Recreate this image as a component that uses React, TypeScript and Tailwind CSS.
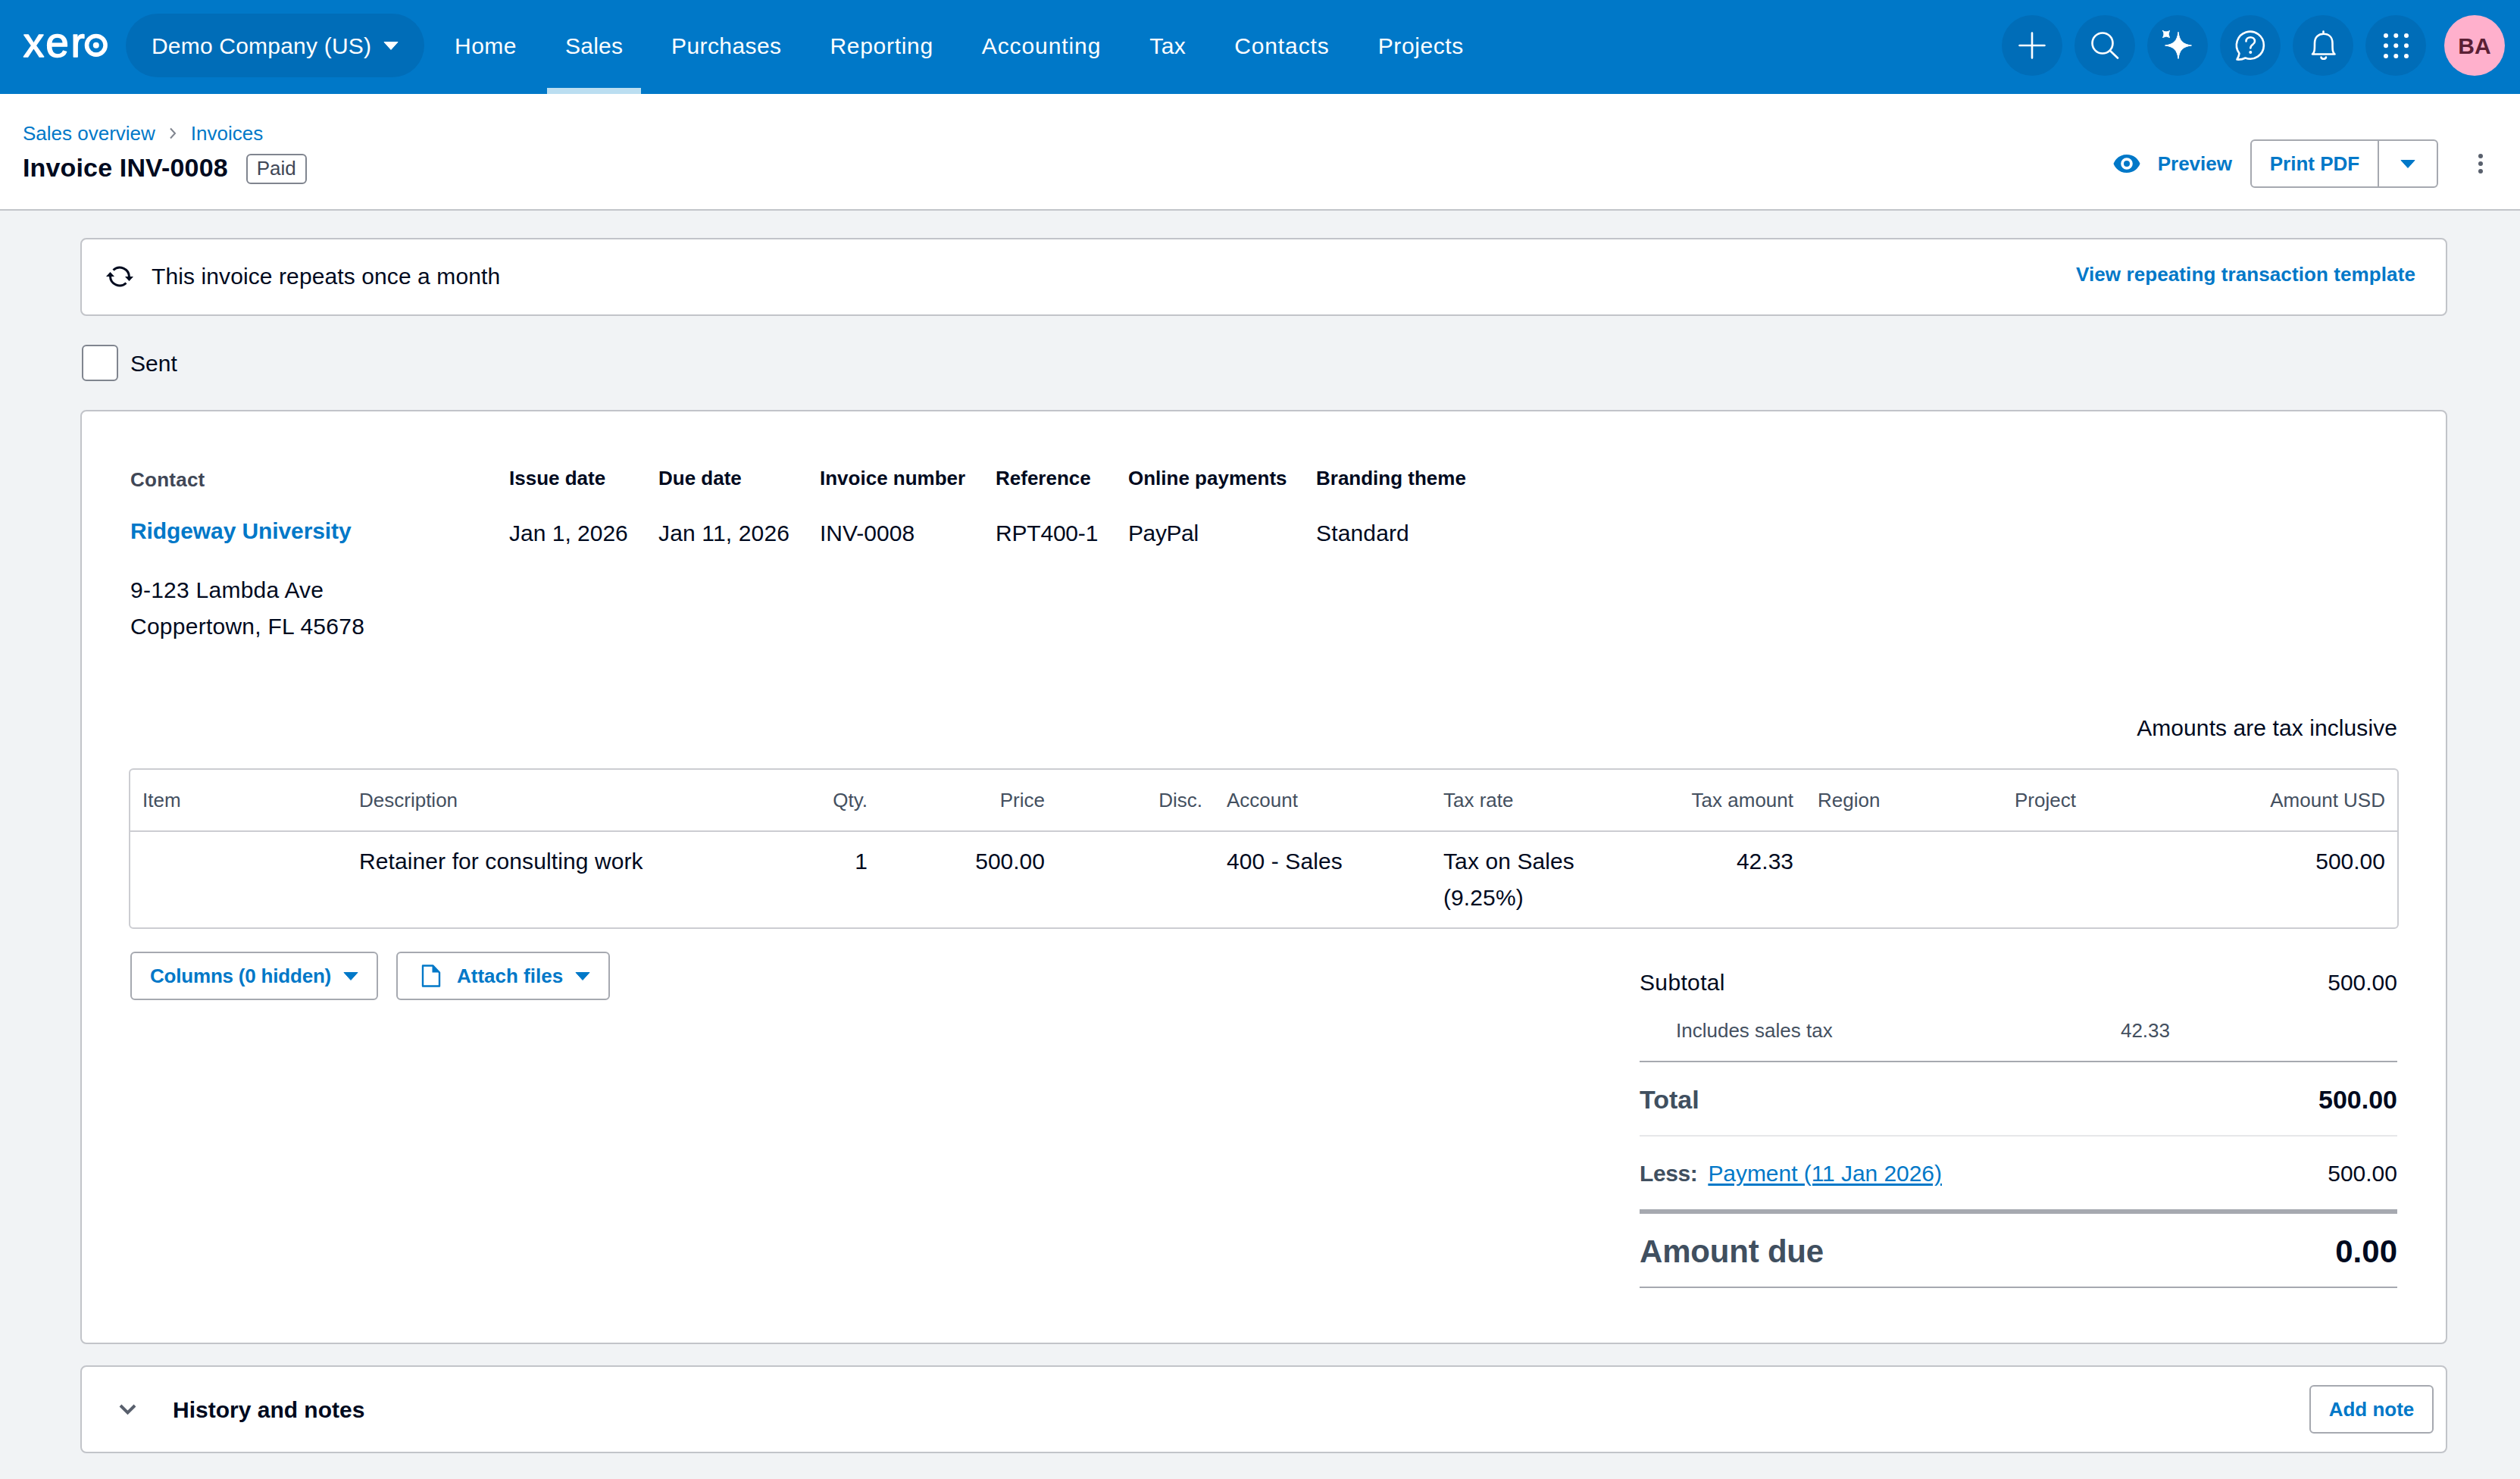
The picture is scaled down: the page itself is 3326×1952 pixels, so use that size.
import type { ReactNode } from 'react';

const navItems = [
  { label: 'Home', className: 'tracking-[0.5px]' },
  { label: 'Sales', className: 'tracking-[0.2px]' },
  { label: 'Purchases', className: 'tracking-[0.4px]' },
  { label: 'Reporting', className: 'tracking-[0.7px]' },
  { label: 'Accounting', className: 'tracking-[0.9px]' },
  { label: 'Tax', className: 'tracking-[0.4px]' },
  { label: 'Contacts', className: 'tracking-[0.9px]' },
  { label: 'Projects', className: 'tracking-[0.6px]' },
];

const details = [
  { label: 'Issue date', value: 'Jan 1, 2026', className: '' },
  { label: 'Due date', value: 'Jan 11, 2026', className: 'tracking-[0.15px]' },
  { label: 'Invoice number', value: 'INV-0008', className: '' },
  { label: 'Reference', value: 'RPT400-1', className: 'tracking-[-0.2px]' },
  { label: 'Online payments', value: 'PayPal', className: 'tracking-[-0.4px]' },
  { label: 'Branding theme', value: 'Standard', className: 'tracking-[0.15px]' },
];

const columns = [
  { label: 'Item', value: '' },
  { label: 'Description', value: 'Retainer for consulting work' },
  { label: 'Qty.', value: '1', right: true },
  { label: 'Price', value: '500.00', right: true },
  { label: 'Disc.', value: '', right: true },
  { label: 'Account', value: '400 - Sales' },
  { label: 'Tax rate', value: 'Tax on Sales (9.25%)' },
  { label: 'Tax amount', value: '42.33', right: true },
  { label: 'Region', value: '' },
  { label: 'Project', value: '' },
  { label: 'Amount USD', value: '500.00', right: true },
];

const tableGrid = 'grid grid-cols-[286px_546px_157px_234px_208px_286px_261px_233px_260px_286px_1fr]';

function Logo() {
  return (
    <svg className="w-[116px] h-[84px] -mx-0.5 shrink-0" viewBox="28 18 116 84" aria-label="xero">
      <text
        x="30.8 60.2 93.4"
        y="74.6"
        fontSize="55"
        fontFamily="'Liberation Sans', sans-serif"
        fill="#fff"
        stroke="#fff"
        strokeWidth="1.4"
        strokeLinejoin="round"
      >
        xer
      </text>
      <circle cx="126.8" cy="59.8" r="12.3" fill="none" stroke="#fff" strokeWidth="5.6" />
      <circle cx="126.8" cy="59.8" r="4" fill="#fff" />
    </svg>
  );
}

function Caret({ className }: { className?: string }) {
  return (
    <svg className={`w-5 h-[11px] shrink-0 ${className ?? ''}`} viewBox="0 0 20 11">
      <path d="M1 0.5h18L10 10.5z" fill="currentColor" stroke="currentColor" strokeLinejoin="round" />
    </svg>
  );
}

function IconButton({ children }: { children: ReactNode }) {
  return (
    <button className="w-20 h-20 rounded-full bg-[#006db8]">
      <svg
        className="w-20 h-20"
        viewBox="0 0 80 80"
        fill="none"
        stroke="#fff"
        strokeWidth="2.6"
        strokeLinecap="round"
        strokeLinejoin="round"
      >
        {children}
      </svg>
    </button>
  );
}

function Header() {
  return (
    <header className="flex h-[124px] bg-[#0078c8] pl-[30px] pr-5 text-[30px] text-white">
      <div className="flex h-[120px] items-center">
        <Logo />
        <button className="ml-6 flex h-[84px] w-[394px] items-center rounded-full bg-[#006db8] pl-[34px]">
          <span className="tracking-[0.2px]">Demo Company (US)</span>
          <Caret className="ml-4" />
        </button>
      </div>
      <nav className="ml-4 flex gap-4">
        {navItems.map(({ label, className }) => (
          <a
            key={label}
            className={`flex h-[124px] items-center border-b-8 px-6 pt-1 ${className} ${
              label === 'Sales' ? 'border-[#bbdef1]' : 'border-transparent'
            }`}
          >
            {label}
          </a>
        ))}
      </nav>
      <div className="ml-auto flex h-[120px] items-center gap-4">
        <IconButton>
          <path d="M40 23.5v33M23.5 40h33" />
        </IconButton>
        <IconButton>
          <circle cx="37" cy="37" r="13.5" />
          <path d="M46.8 46.8L57 56.5" />
        </IconButton>
        <IconButton>
          <path
            d="M41 22.5C42.5 34 47 38.5 58.5 40C47 41.5 42.5 46 41 57.5C39.5 46 35 41.5 23.5 40C35 38.5 39.5 34 41 22.5z"
            fill="#fff"
            strokeWidth="1"
          />
          <path d="M20.5 20.5Q25 23.5 29.5 20.5Q26.5 25 29.5 29.5Q25 26.5 20.5 29.5Q23.5 25 20.5 20.5z" fill="#fff" strokeWidth="1" />
        </IconButton>
        <IconButton>
          <path d="M25.5 50.5A18 18 0 1 1 33.5 56.5Q28.5 59 22.5 58.5Q25 54.5 25.5 50.5z" />
          <path d="M34.5 34.5C34.5 27.5 46 27.5 46 34.5C46 39 40.3 38.5 40.3 43.5" />
          <circle cx="40.3" cy="49" r="2" fill="#fff" stroke="none" />
        </IconButton>
        <IconButton>
          <path d="M40.5 21.5v3M26 51.5h29.5C52.5 49 52.5 46 52.5 37C52.5 29 47.5 24.8 40.7 24.8C34 24.8 29 29 29 37C29 46 29 49 26 51.5z" />
          <path d="M37.5 55.5C38 58.5 43.5 58.5 44 55.5" />
        </IconButton>
        <IconButton>
          {[27, 40.3, 54].map((y) =>
            [27, 40.3, 54].map((x) => <circle key={`${x}-${y}`} cx={x} cy={y} r="3" fill="#fff" stroke="none" />)
          )}
        </IconButton>
        <div className="ml-2 flex h-20 w-20 items-center justify-center rounded-full bg-[#ffb0cc] text-[30px] font-bold text-[#5b1f35]">
          BA
        </div>
      </div>
    </header>
  );
}

function TitleBar() {
  return (
    <div className="flex h-[154px] justify-between border-b-2 border-[#c2c5ca] bg-white pl-[30px] pr-[49px]">
      <div className="pt-[34px]">
        <div className="flex items-center text-[26px] leading-9 text-[#0078c8]">
          <a>Sales overview</a>
          <svg className="ml-[17px] mr-[18px] h-4 w-3" viewBox="0 0 12 16" fill="none" stroke="#80858f" strokeWidth="2">
            <path d="M3 1.5L9 8L3 14.5" />
          </svg>
          <a>Invoices</a>
        </div>
        <div className="mt-[9px] flex items-center">
          <h1 className="pb-1 text-[34px] font-bold leading-9 tracking-[0.15px]">Invoice INV-0008</h1>
          <span className="ml-6 flex h-10 items-center rounded-md border-2 border-[#80858f] px-3 pb-0.5 text-[26px] text-[#404756]">
            Paid
          </span>
        </div>
      </div>
      <div className="flex h-16 items-center mt-[60px] text-[26px] font-bold text-[#0078c8]">
        <svg className="h-6 w-9" viewBox="0 0 36 24">
          <path
            fill="currentColor"
            fillRule="evenodd"
            d="M18 0C9 0 3 5.5 0.5 12C3 18.5 9 24 18 24S33 18.5 35.5 12C33 5.5 27 0 18 0zM18 4.2a7.8 7.8 0 1 1 0 15.6a7.8 7.8 0 0 1 0-15.6z"
          />
          <circle cx="18" cy="12" r="4" fill="currentColor" />
        </svg>
        <a className="ml-[23px]">Preview</a>
        <div className="ml-6 flex h-16 w-[248px] rounded-md border-2 border-[#a6a9b0]">
          <button className="w-[166px]">Print PDF</button>
          <button className="flex flex-1 items-center justify-center border-l-2 border-[#a6a9b0]">
            <Caret />
          </button>
        </div>
        <div className="ml-[53px] flex flex-col gap-1">
          <span className="h-1.5 w-1.5 rounded-full bg-[#59606d]" />
          <span className="h-1.5 w-1.5 rounded-full bg-[#59606d]" />
          <span className="h-1.5 w-1.5 rounded-full bg-[#59606d]" />
        </div>
      </div>
    </div>
  );
}

function Totals() {
  return (
    <div className="mt-[17px] w-[1000px] text-[30px]">
      <div className="flex justify-between leading-[48px]">
        <span className="tracking-[0.35px]">Subtotal</span>
        <span>500.00</span>
      </div>
      <div className="mt-[21px] flex justify-between border-b-2 border-[#a6a9b0] pb-[22px] pl-12 pr-[300px] text-[26px] leading-9 text-[#44505f]">
        <span>Includes sales tax</span>
        <span>42.33</span>
      </div>
      <div className="flex h-[98px] items-center justify-between border-b-2 border-[#e6e7e9] pt-0.5 text-[34px] font-bold">
        <span className="text-[#404f5f]">Total</span>
        <span>500.00</span>
      </div>
      <div className="flex h-[102px] items-center justify-between border-b-[6px] border-[#a6a9b0]">
        <span>
          <span className="mr-3.5 font-bold tracking-[-0.4px] text-[#404f5f]">Less:</span>
          <a className="tracking-[-0.05px] text-[#0078c8] underline decoration-[3px] underline-offset-[3px]">
            Payment (11 Jan 2026)
          </a>
        </span>
        <span>500.00</span>
      </div>
      <div className="flex h-[98px] items-center justify-between border-b-2 border-[#a6a9b0] pt-0.5 text-[42px] font-bold">
        <span className="tracking-[-0.2px] text-[#404f5f]">Amount due</span>
        <span>0.00</span>
      </div>
    </div>
  );
}

function InvoiceCard() {
  return (
    <section className="mt-[38px] h-[1233px] rounded-lg border-2 border-[#c2c4c9] bg-white px-16 pt-[70px]">
      <div className="flex">
        <div className="w-[500px] pt-0.5 text-[30px]">
          <h2 className="text-[26px] font-bold leading-9 tracking-[0.25px] text-[#404756]">Contact</h2>
          <a className="mt-[26px] block font-bold leading-[48px] tracking-[-0.1px] text-[#0078c8]">Ridgeway University</a>
          <p className="mt-[30px] leading-[48px] tracking-[0.25px]">
            9-123 Lambda Ave
            <br />
            Coppertown, FL 45678
          </p>
        </div>
        <dl className="grid grid-cols-[197px_213px_232px_175px_248px_auto]">
          {details.map(({ label, value, className }) => (
            <div key={label} className="whitespace-nowrap">
              <dt className="text-[26px] font-bold leading-9">{label}</dt>
              <dd className={`mt-[31px] text-[30px] leading-[48px] ${className}`}>{value}</dd>
            </div>
          ))}
        </dl>
      </div>

      <p className="mt-[86px] text-right text-[30px] leading-[48px] tracking-[0.08px]">Amounts are tax inclusive</p>

      {/* Line items */}
      <div className="-mx-0.5 mt-[29px] h-[212px] rounded-md border-2 border-[#cccdd2]">
        <div className={`${tableGrid} h-[82px] items-center border-b-2 border-[#cccdd2] text-[26px] text-[#44505f]`}>
          {columns.map(({ label, right }) => (
            <div key={label} className={right ? 'px-4 text-right' : 'px-4'}>
              {label}
            </div>
          ))}
        </div>
        <div className={`${tableGrid} pt-[15px] text-[30px] leading-[48px]`}>
          {columns.map(({ label, value, right }) => (
            <div key={label} className={right ? 'px-4 text-right' : 'px-4 tracking-[0.1px]'}>
              {value}
            </div>
          ))}
        </div>
      </div>

      <div className="mt-[30px] flex items-start justify-between">
        <div className="flex gap-6 text-[26px] font-bold text-[#0078c8]">
          <button className="flex h-16 w-[327px] items-center rounded-md border-2 border-[#a6a9b0] pl-6">
            <span className="tracking-[-0.2px]">Columns (0 hidden)</span>
            <Caret className="ml-4" />
          </button>
          <button className="flex h-16 w-[282px] items-center rounded-md border-2 border-[#a6a9b0] pl-[31px]">
            <svg className="h-[30px] w-[26px]" viewBox="0 0 26 30">
              <path d="M2 1.5h13.5l8.5 9v18H2z" fill="none" stroke="currentColor" strokeWidth="2.4" strokeLinejoin="round" />
              <path d="M14.5 1v9.500h10z" fill="currentColor" />
            </svg>
            <span className="ml-[21px]">Attach files</span>
            <Caret className="ml-4" />
          </button>
        </div>
        <Totals />
      </div>
    </section>
  );
}

export default function App() {
  return (
    <div className="h-[1952px] w-[3326px] overflow-hidden bg-[#f1f3f5] font-['Liberation_Sans',Arial,sans-serif] text-[#000a1e]">
      <Header />
      <TitleBar />
      <main className="pl-[106px] pr-24 pt-9">
        <div className="flex h-[103px] items-center justify-between rounded-lg border-2 border-[#c2c4c9] bg-white pl-8 pr-10">
          <div className="flex items-center pb-0.5 text-[30px]">
            <svg className="h-9 w-9" viewBox="0 0 36 36" fill="none" stroke="currentColor" strokeWidth="3">
              <path d="M9.5 9.5A12.5 12.5 0 0 1 30.5 18.5M26.5 26.5A12.5 12.5 0 0 1 5.5 17.5" />
              <path d="M25 18h11l-5.500 6zM0 18h11l-5.500-6z" fill="currentColor" stroke="none" />
            </svg>
            <span className="ml-6 tracking-[0.1px]">This invoice repeats once a month</span>
          </div>
          <a className="pb-1.5 text-[26px] font-bold tracking-[0.1px] text-[#0078c8]">View repeating transaction template</a>
        </div>

        <label className="ml-0.5 mt-[38px] flex h-12 items-center text-[30px]">
          <span className="h-12 w-12 rounded-md border-2 border-[#80858f] bg-white" />
          <span className="ml-4">Sent</span>
        </label>

        <InvoiceCard />

        <section className="mt-7 flex h-[116px] items-center rounded-lg border-2 border-[#c2c4c9] bg-white pl-[49px] pr-4 text-[30px] font-bold">
          <svg className="h-[15px] w-[23px]" viewBox="0 0 23 15" fill="none" stroke="#59606d" strokeWidth="4">
            <path d="M2 2L11.5 11.5L21 2" />
          </svg>
          <h2 className="ml-[48px]">History and notes</h2>
          <button className="ml-auto h-16 w-[164px] rounded-md border-2 border-[#a6a9b0] text-[26px] text-[#0078c8]">
            Add note
          </button>
        </section>
      </main>
    </div>
  );
}
